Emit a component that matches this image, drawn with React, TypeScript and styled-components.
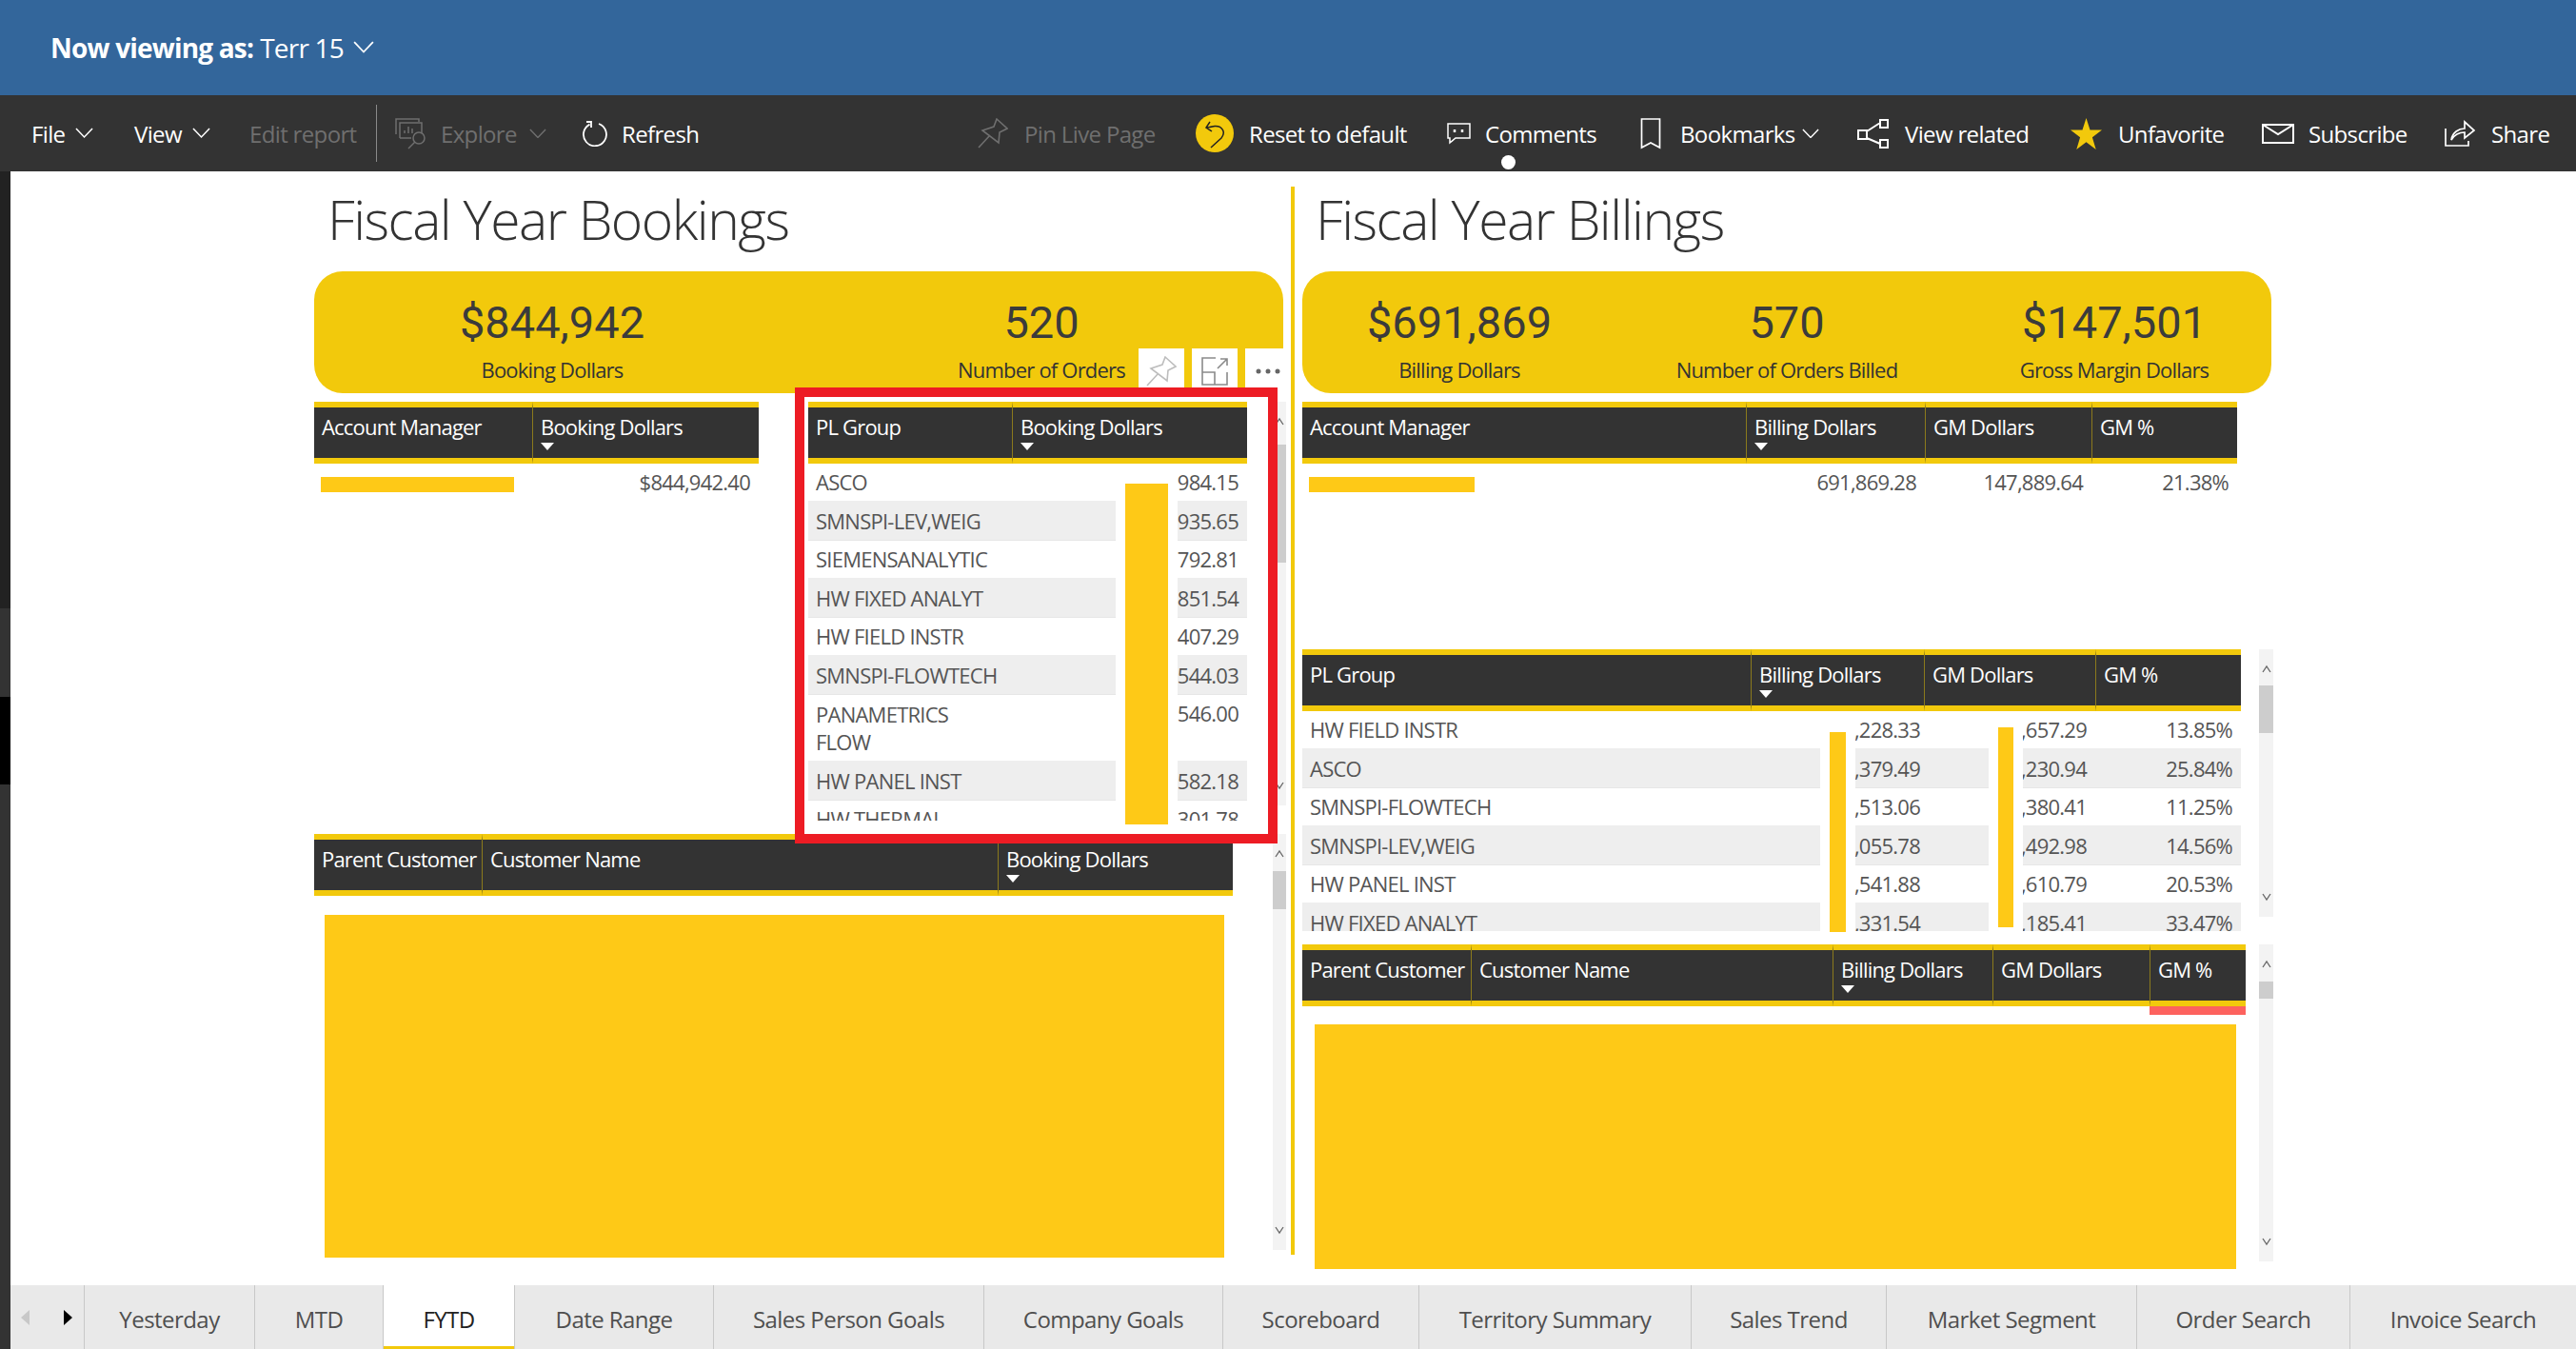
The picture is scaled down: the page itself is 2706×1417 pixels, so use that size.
import React from 'react'
import styled, { createGlobalStyle } from 'styled-components'

const FONT = "'Open Sans', 'Noto Sans', sans-serif"
const GOLD = '#f2c90c'
const BAR = '#fec917'

const GlobalStyle = createGlobalStyle`
  html, body {
    margin: 0;
    padding: 0;
    background: #fff;
  }
  * {
    box-sizing: border-box;
  }
`

const Page = styled.div`
  display: flex;
  flex-direction: column;
  width: 2706px;
  height: 1417px;
  overflow: hidden;
  font-family: ${FONT};
`
const Banner = styled.header`
  display: flex;
  align-items: center;
  flex: 0 0 100px;
  padding: 0 0 0 53px;
  background: #33669b;
  color: #fff;
  font-size: 28px;
  letter-spacing: -0.8px;
`
const BannerStrong = styled.strong`
  font-weight: 700;
  margin-right: 7px;
`
const BannerCaret = styled.span`
  display: flex;
  margin-left: 10px;
`
const Toolbar = styled.nav`
  position: relative;
  display: flex;
  align-items: center;
  flex: 0 0 80px;
  padding-left: 33px;
  background: #333;
  font-size: 24px;
  letter-spacing: -0.65px;
`
const ToolItem = styled.div<{ $w?: number; $off?: boolean; $gap?: number }>`
  display: flex;
  align-items: center;
  flex: 0 0 ${({ $w }) => ($w ? `${$w}px` : 'auto')};
  gap: ${({ $gap }) => $gap ?? 14}px;
  height: 44px;
  white-space: nowrap;
  color: ${({ $off }) => ($off ? '#6f6f6f' : '#fff')};
`
const ToolCaret = styled.span<{ $ml: number }>`
  display: flex;
  margin-left: ${({ $ml }) => $ml}px;
`
const ToolRule = styled.div`
  flex: 0 0 1px;
  height: 60px;
  margin-right: 19px;
  background: #8a8a8a;
`
const ActiveDot = styled.span`
  position: absolute;
  left: 1577px;
  top: 63px;
  width: 15px;
  height: 15px;
  border-radius: 50%;
  background: #fff;
`
const Body = styled.div`
  display: flex;
  flex: 1;
  min-height: 0;
`
const Edge = styled.div`
  display: flex;
  flex-direction: column;
  flex: 0 0 11px;
  background: #333;
`
const EdgeBlock = styled.div<{ $h: number; $c: string }>`
  flex: 0 0 ${({ $h }) => $h}px;
  background: ${({ $c }) => $c};
`
const Canvas = styled.div`
  flex: 1;
  display: flex;
  flex-direction: column;
  min-width: 0;
`
const Report = styled.main`
  display: flex;
  flex: 1;
  padding-left: 319px;
  min-height: 0;
  color: #555;
`
const Column = styled.section<{ $w: number; $ml?: number }>`
  position: relative;
  flex: 0 0 ${({ $w }) => $w}px;
  margin-left: ${({ $ml }) => $ml ?? 0}px;
`
const Divider = styled.div`
  flex: 0 0 4px;
  height: 1122px;
  margin-top: 16px;
  background: ${GOLD};
`
const Title = styled.h1`
  display: flex;
  align-items: center;
  height: 105px;
  margin: 0;
  padding: 0 0 5px 14px;
  font-size: 57px;
  font-weight: 300;
  letter-spacing: -1.5px;
  color: #333;
`
const KpiCard = styled.div<{ $n: number }>`
  position: relative;
  display: grid;
  grid-template-columns: repeat(${({ $n }) => $n}, ${({ $n }) => ($n === 2 ? 514 : 344)}px);
  justify-content: center;
  width: 1018px;
  height: 128px;
  margin-bottom: 9px;
  padding: 24px ${({ $n }) => ($n === 2 ? 4 : 0)}px 0 0;
  border-radius: 30px;
  background: ${GOLD};
`
const Kpi = styled.div`
  display: flex;
  flex-direction: column;
  align-items: center;
  min-width: 0;
  color: #333;
`
const KpiValue = styled.div`
  height: 60px;
  font-family: Roboto, sans-serif;
  font-size: 47px;
  line-height: 60px;
  letter-spacing: 0;
  color: #3b3b3b;
`
const KpiLabel = styled.div`
  margin-top: 4px;
  font-size: 22px;
  line-height: 30px;
  letter-spacing: -0.8px;
  white-space: nowrap;
`
const VisualActions = styled.div`
  position: absolute;
  left: 866px;
  top: 81px;
  display: flex;
  gap: 8px;
`
const ActionBox = styled.div`
  display: flex;
  align-items: center;
  justify-content: center;
  width: 48px;
  height: 41px;
  padding-top: 7px;
  background: #fff;
`
const Row = styled.div<{ $h: number }>`
  display: flex;
  align-items: flex-start;
  height: ${({ $h }) => $h}px;
`
const TableWrap = styled.div<{ $w: number; $mr?: number }>`
  position: relative;
  flex: 0 0 ${({ $w }) => $w}px;
  margin-right: ${({ $mr }) => $mr ?? 0}px;
`
const HeadRow = styled.div<{ $cols: string }>`
  display: grid;
  grid-template-columns: ${({ $cols }) => $cols};
  height: 65px;
  background: #333;
`
const HeadCell = styled.div`
  padding: 5px 0 0 8px;
  border-top: 6px solid ${GOLD};
  border-bottom: 6px solid ${GOLD};
  border-left: 1px solid #8b7a1c;
  color: #fff;
  font-size: 22px;
  line-height: 30px;
  letter-spacing: -0.8px;
  white-space: nowrap;
  overflow: hidden;
  &:first-child {
    border-left: 0;
  }
`
const SortMark = styled.span`
  display: block;
  width: 0;
  height: 0;
  margin: 2px 0 0 0;
  border-left: 7px solid transparent;
  border-right: 7px solid transparent;
  border-top: 8px solid #fff;
`
const BodyClip = styled.div<{ $h: number }>`
  height: ${({ $h }) => $h}px;
  overflow: hidden;
`
const DataRow = styled.div<{ $cols: string; $h: number }>`
  display: grid;
  grid-template-columns: ${({ $cols }) => $cols};
  height: ${({ $h }) => $h}px;
`
const DataCell = styled.div<{ $shade?: boolean; $right?: boolean; $pr?: number; $top?: boolean }>`
  display: flex;
  align-items: ${({ $top }) => ($top ? 'flex-start' : 'center')};
  justify-content: ${({ $right }) => ($right ? 'flex-end' : 'flex-start')};
  padding: ${({ $shade, $top }) => ($top ? 5 : $shade ? 1 : 0)}px ${({ $right, $pr }) => ($right ? $pr ?? 9 : 0)}px 0
    ${({ $right }) => ($right ? 0 : 8)}px;
  overflow: hidden;
  background: ${({ $shade }) => ($shade ? '#eee' : 'transparent')};
  border-bottom: ${({ $shade }) => ($shade ? '1px solid #e6e6e6' : '0')};
  font-size: 22px;
  line-height: 29px;
  letter-spacing: -0.75px;
  white-space: nowrap;
  color: #555;
`
const DataBar = styled.div<{ $l: number; $t: number; $w: number; $h: number }>`
  position: absolute;
  left: ${({ $l }) => $l}px;
  top: ${({ $t }) => $t}px;
  width: ${({ $w }) => $w}px;
  height: ${({ $h }) => $h}px;
  background: ${BAR};
`
const FlatBar = styled.div<{ $w: number }>`
  width: ${({ $w }) => $w}px;
  height: 16px;
  margin: 4px 0 0 -1px;
  background: ${BAR};
`
const Redacted = styled.div<{ $w: number; $h: number; $ml: number; $mt: number }>`
  width: ${({ $w }) => $w}px;
  height: ${({ $h }) => $h}px;
  margin: ${({ $mt }) => $mt}px 0 0 ${({ $ml }) => $ml}px;
  background: ${BAR};
`
const WarnStrip = styled.div`
  width: 101px;
  height: 9px;
  margin-left: 890px;
  background: #fd625e;
`
const Track = styled.div<{ $h: number; $w: number }>`
  display: flex;
  flex-direction: column;
  align-items: center;
  flex: 0 0 ${({ $w }) => $w}px;
  height: ${({ $h }) => $h}px;
  padding: 15px 0;
  background: #f3f3f3;
`
const Thumb = styled.div<{ $top: number; $h: number }>`
  flex: 0 0 ${({ $h }) => $h}px;
  align-self: stretch;
  margin-top: ${({ $top }) => $top}px;
  background: #cdcdcd;
`
const TrackEnd = styled.div`
  margin-top: auto;
  line-height: 0;
`
const Highlight = styled.div`
  position: absolute;
  left: 505px;
  top: 227px;
  width: 507px;
  height: 479px;
  border: 10px solid #ed1c24;
  pointer-events: none;
`
const Tabs = styled.div`
  display: flex;
  flex: 0 0 67px;
  background: #e9e9e9;
`
const TabArrows = styled.div`
  display: flex;
  align-items: center;
  flex: 0 0 78px;
  gap: 36px;
  padding-left: 11px;
  border-right: 1px solid #c8c8c8;
`
const TabArrow = styled.span<{ $left?: boolean }>`
  width: 0;
  height: 0;
  border-top: 8px solid transparent;
  border-bottom: 8px solid transparent;
  ${({ $left }) => ($left ? 'border-right: 9px solid #c8c8c8;' : 'border-left: 9px solid #000;')}
`
const Tab = styled.div<{ $w: number; $active?: boolean }>`
  display: flex;
  align-items: center;
  justify-content: center;
  flex: 0 0 ${({ $w }) => $w}px;
  padding-top: 3px;
  border-right: 1px solid #c8c8c8;
  box-shadow: ${({ $active }) => ($active ? `inset 0 -3px 0 ${GOLD}` : 'none')};
  background: ${({ $active }) => ($active ? '#fff' : 'transparent')};
  color: ${({ $active }) => ($active ? '#222' : '#4f4f4f')};
  font-size: 24px;
  font-weight: 500;
  letter-spacing: -0.55px;
  white-space: nowrap;
  &:last-child {
    border-right: 0;
  }
`
const PctCell = styled.span`
  flex: 0 0 153px;
  text-align: right;
`

const Chevron = ({ size = 18, dim = false }: { size?: number; dim?: boolean }) => (
  <svg width={size} height={size * 0.6} viewBox="0 0 20 12" fill="none" stroke={dim ? '#6f6f6f' : '#fff'} strokeWidth="1.6">
    <path d="M1 1l9 9.500L19 1" />
  </svg>
)

const ScrollArrow = ({ up }: { up?: boolean }) => (
  <svg width="10" height="12" viewBox="0 0 10 12" fill="none" stroke="#666" strokeWidth="1.3">
    <path d={up ? 'M1 9l4-6 4 6' : 'M1 3l4 6 4-6'} />
  </svg>
)

const Scroll = ({ h, w = 14, top, thumb }: { h: number; w?: number; top: number; thumb: number }) => (
  <Track $h={h} $w={w}>
    <ScrollArrow up />
    <Thumb $top={top} $h={thumb} />
    <TrackEnd>
      <ScrollArrow />
    </TrackEnd>
  </Track>
)

const PinIcon = ({ stroke = '#6f6f6f', size = 32 }: { stroke?: string; size?: number }) => (
  <svg width={size} height={size} viewBox="0 0 32 32" fill="none" stroke={stroke} strokeWidth="1.6">
    <path d="M20 1L31 11l-8 4-1 11L5 13l12-4 3-8zM1 31l12-13" />
  </svg>
)
const ExploreIcon = () => (
  <svg width="33" height="33" viewBox="0 0 33 33" fill="none" stroke="#6f6f6f" strokeWidth="1.5">
    <path d="M1 17V1h24v3M5 21V5h23v11M5 21h12M10 16v-3M14 16V9M18 16v-5" />
    <circle cx="25" cy="21" r="6" />
    <path d="M21 25l-7 7" />
  </svg>
)
const RefreshIcon = () => (
  <svg width="27" height="27" viewBox="0 0 27 27" fill="none" stroke="#fff" strokeWidth="1.8">
    <path d="M17 3a12 12 0 1 1-9.500 .6M4 1h5v6" />
  </svg>
)
const ResetIcon = () => (
  <svg width="40" height="40" viewBox="0 0 40 40" fill="none">
    <circle cx="20" cy="20" r="20" fill={GOLD} />
    <path d="M16 35l11-10c5-6 1-13-7-12.500l-8 1.500M15 8l-4 6 6 4" stroke="#222" strokeWidth="1.5" />
  </svg>
)
const CommentIcon = () => (
  <svg width="25" height="23" viewBox="0 0 25 23" fill="none" stroke="#fff" strokeWidth="1.5">
    <path d="M1 1h23v15H9l-6 5v-5H1z" />
    <path d="M8 7v3M16 7v3" strokeWidth="2.500" />
  </svg>
)
const BookmarkIcon = () => (
  <svg width="22" height="33" viewBox="0 0 22 33" fill="none" stroke="#fff" strokeWidth="1.7">
    <path d="M1.500 1h19v30l-9.500-5-9.500 5z" />
  </svg>
)
const RelatedIcon = () => (
  <svg width="33" height="31" viewBox="0 0 33 31" fill="none" stroke="#fff" strokeWidth="2">
    <path d="M1 12h9v9H1zM24 1h8v8h-8zM24 22h8v8h-8zM10 13l14-9M10 20l14 6" />
  </svg>
)
const StarIcon = () => (
  <svg width="33" height="33" viewBox="0 0 33 33" fill={GOLD}>
    <path d="M16.500 0l4 12.600H33l-10.100 7.600 3.800 12.800-10.200-7.800L6.300 33l3.800-12.800L0 12.600h12.500z" />
  </svg>
)
const MailIcon = () => (
  <svg width="34" height="21" viewBox="0 0 34 21" fill="none" stroke="#fff" strokeWidth="2">
    <path d="M1 1h32v19H1zM1 1l16 10L33 1" />
  </svg>
)
const ShareIcon = () => (
  <svg width="32" height="28" viewBox="0 0 32 28" fill="none" stroke="#fff" strokeWidth="1.700">
    <path d="M1 9v18h24v-5M7 21c1-8 8-12 14-12V2l10 9-10 8v-6c-6 0-11 3-14 8z" />
  </svg>
)
const FocusIcon = () => (
  <svg width="30" height="30" viewBox="0 0 30 30" fill="none" stroke="#8a8a8a" strokeWidth="1.6">
    <path d="M16 1H2v28h26V16M2 16h13v13M18 12L28 2M21 2h7v7" />
  </svg>
)
const DotsIcon = () => (
  <svg width="26" height="6" viewBox="0 0 26 6" fill="#666">
    <circle cx="3" cy="3" r="2.500" />
    <circle cx="13" cy="3" r="2.500" />
    <circle cx="23" cy="3" r="2.500" />
  </svg>
)

type Head = { label: string; sorted?: boolean }

const TableHead = ({ cols, heads }: { cols: string; heads: Head[] }) => (
  <HeadRow $cols={cols}>
    {heads.map((h) => (
      <HeadCell key={h.label}>
        {h.label}
        {h.sorted && <SortMark />}
      </HeadCell>
    ))}
  </HeadRow>
)

const bookingGroups: [React.ReactNode, string, number][] = [
  ['ASCO', '984.15', 39],
  ['SMNSPI-LEV,WEIG', '935.65', 42],
  ['SIEMENSANALYTIC', '792.81', 39],
  ['HW FIXED ANALYT', '851.54', 42],
  ['HW FIELD INSTR', '407.29', 39],
  ['SMNSPI-FLOWTECH', '544.03', 42],
  [<>PANAMETRICS<br />FLOW</>, '546.00', 69],
  ['HW PANEL INST', '582.18', 42],
  ['HW THERMAL', '301.78', 39],
]

const billingGroups = [
  ['HW FIELD INSTR', ',228.33', ',657.29', '13.85%'],
  ['ASCO', ',379.49', ',230.94', '25.84%'],
  ['SMNSPI-FLOWTECH', ',513.06', ',380.41', '11.25%'],
  ['SMNSPI-LEV,WEIG', ',055.78', ',492.98', '14.56%'],
  ['HW PANEL INST', ',541.88', ',610.79', '20.53%'],
  ['HW FIXED ANALYT', ',331.54', ',185.41', '33.47%'],
]

const tabs: [string, number][] = [
  ['Yesterday', 179],
  ['MTD', 135],
  ['FYTD', 138],
  ['Date Range', 209],
  ['Sales Person Goals', 284],
  ['Company Goals', 251],
  ['Scoreboard', 206],
  ['Territory Summary', 286],
  ['Sales Trend', 205],
  ['Market Segment', 263],
  ['Order Search', 224],
  ['Invoice Search', 237],
]

const App = () => {
  const bookingGrid = '323px 65px 73px'
  const billingGrid = '544px 37px 140px 36px 229px'
  return (
    <Page>
      <GlobalStyle />
      <Banner>
        <BannerStrong>Now viewing as:</BannerStrong> Terr 15
        <BannerCaret><Chevron size={22} /></BannerCaret>
      </Banner>
      <Toolbar>
        <ToolItem $w={108}>File <ToolCaret $ml={-3}><Chevron size={19} /></ToolCaret></ToolItem>
        <ToolItem $w={121}>View <ToolCaret $ml={-3}><Chevron size={19} /></ToolCaret></ToolItem>
        <ToolItem $w={133} $off>Edit report</ToolItem>
        <ToolRule />
        <ToolItem $w={197} $off $gap={15}><ExploreIcon />Explore <ToolCaret $ml={-2}><Chevron dim /></ToolCaret></ToolItem>
        <ToolItem $w={415}><RefreshIcon />Refresh</ToolItem>
        <ToolItem $w={229} $off $gap={17}><PinIcon />Pin Live Page</ToolItem>
        <ToolItem $w={264} $gap={16}><ResetIcon />Reset to default</ToolItem>
        <ToolItem $w={203} $gap={15}><CommentIcon />Comments</ToolItem>
        <ToolItem $w={228} $gap={20}><BookmarkIcon />Bookmarks <ToolCaret $ml={-13}><Chevron /></ToolCaret></ToolItem>
        <ToolItem $w={224} $gap={17}><RelatedIcon />View related</ToolItem>
        <ToolItem $w={201} $gap={17}><StarIcon />Unfavorite</ToolItem>
        <ToolItem $w={192} $gap={15}><MailIcon />Subscribe</ToolItem>
        <ToolItem $gap={17}><ShareIcon />Share</ToolItem>
        <ActiveDot />
      </Toolbar>
      <Body>
        <Edge>
          <EdgeBlock $h={459} $c="#222" />
          <EdgeBlock $h={93} $c="#333" />
          <EdgeBlock $h={92} $c="#000" />
        </Edge>
        <Canvas>
          <Report>
            <Column $w={1026}>
              <Title>Fiscal Year Bookings</Title>
              <KpiCard $n={2}>
                <Kpi>
                  <KpiValue>$844,942</KpiValue>
                  <KpiLabel>Booking Dollars</KpiLabel>
                </Kpi>
                <Kpi>
                  <KpiValue>520</KpiValue>
                  <KpiLabel>Number of Orders</KpiLabel>
                </Kpi>
                <VisualActions>
                  <ActionBox><PinIcon stroke="#bdbdbd" /></ActionBox>
                  <ActionBox><FocusIcon /></ActionBox>
                  <ActionBox><DotsIcon /></ActionBox>
                </VisualActions>
              </KpiCard>
              <Row $h={454}>
                <TableWrap $w={467} $mr={52}>
                  <TableHead
                    cols="229px 238px"
                    heads={[{ label: 'Account Manager' }, { label: 'Booking Dollars', sorted: true }]}
                  />
                  <DataRow $cols="229px 238px" $h={39}>
                    <DataCell><FlatBar $w={203} /></DataCell>
                    <DataCell $right>$844,942.40</DataCell>
                  </DataRow>
                </TableWrap>
                <TableWrap $w={461} $mr={27}>
                  <TableHead
                    cols="214px 247px"
                    heads={[{ label: 'PL Group' }, { label: 'Booking Dollars', sorted: true }]}
                  />
                  <BodyClip $h={375}>
                    {bookingGroups.map(([name, value, h], i) => (
                      <DataRow key={value} $cols={bookingGrid} $h={h}>
                        <DataCell $shade={i % 2 === 1}>{name}</DataCell>
                        <DataCell />
                        <DataCell $shade={i % 2 === 1} $right $top={h > 42}>{value}</DataCell>
                      </DataRow>
                    ))}
                  </BodyClip>
                  <DataBar $l={333} $t={86} $w={45} $h={358} />
                </TableWrap>
                <Scroll h={424} top={18} thumb={124} />
              </Row>
              <Row $h={470}>
                <TableWrap $w={965} $mr={42}>
                  <TableHead
                    cols="176px 542px 247px"
                    heads={[{ label: 'Parent Customer' }, { label: 'Customer Name' }, { label: 'Booking Dollars', sorted: true }]}
                  />
                  <Redacted $w={945} $h={360} $ml={11} $mt={20} />
                </TableWrap>
                <Scroll h={437} top={12} thumb={40} />
              </Row>
              <Highlight />
            </Column>
            <Divider />
            <Column $w={1030} $ml={8}>
              <Title>Fiscal Year Billings</Title>
              <KpiCard $n={3}>
                <Kpi>
                  <KpiValue>$691,869</KpiValue>
                  <KpiLabel>Billing Dollars</KpiLabel>
                </Kpi>
                <Kpi>
                  <KpiValue>570</KpiValue>
                  <KpiLabel>Number of Orders Billed</KpiLabel>
                </Kpi>
                <Kpi>
                  <KpiValue>$147,501</KpiValue>
                  <KpiLabel>Gross Margin Dollars</KpiLabel>
                </Kpi>
              </KpiCard>
              <Row $h={260}>
                <TableWrap $w={982}>
                  <TableHead
                    cols="466px 188px 175px 153px"
                    heads={[
                      { label: 'Account Manager' },
                      { label: 'Billing Dollars', sorted: true },
                      { label: 'GM Dollars' },
                      { label: 'GM %' },
                    ]}
                  />
                  <DataRow $cols="466px 188px 175px 153px" $h={39}>
                    <DataCell><FlatBar $w={174} /></DataCell>
                    <DataCell $right>691,869.28</DataCell>
                    <DataCell $right>147,889.64</DataCell>
                    <DataCell $right>21.38%</DataCell>
                  </DataRow>
                </TableWrap>
              </Row>
              <Row $h={310}>
                <TableWrap $w={986} $mr={19}>
                  <TableHead
                    cols="471px 182px 180px 153px"
                    heads={[
                      { label: 'PL Group' },
                      { label: 'Billing Dollars', sorted: true },
                      { label: 'GM Dollars' },
                      { label: 'GM %' },
                    ]}
                  />
                  <BodyClip $h={231}>
                    {billingGroups.map(([name, billing, gm, pct], i) => (
                      <DataRow key={name} $cols={billingGrid} $h={i % 2 === 1 ? 42 : 39}>
                        <DataCell $shade={i % 2 === 1}>{name}</DataCell>
                        <DataCell />
                        <DataCell $shade={i % 2 === 1} $right $pr={72}>{billing}</DataCell>
                        <DataCell />
                        <DataCell $shade={i % 2 === 1} $right>
                          {gm}
                          <PctCell>{pct}</PctCell>
                        </DataCell>
                      </DataRow>
                    ))}
                  </BodyClip>
                  <DataBar $l={554} $t={87} $w={17} $h={210} />
                  <DataBar $l={731} $t={82} $w={16} $h={210} />
                </TableWrap>
                <Scroll h={281} w={15} top={11} thumb={50} />
              </Row>
              <Row $h={341}>
                <TableWrap $w={991} $mr={14}>
                  <TableHead
                    cols="177px 380px 168px 165px 101px"
                    heads={[
                      { label: 'Parent Customer' },
                      { label: 'Customer Name' },
                      { label: 'Billing Dollars', sorted: true },
                      { label: 'GM Dollars' },
                      { label: 'GM %' },
                    ]}
                  />
                  <WarnStrip />
                  <Redacted $w={968} $h={257} $ml={13} $mt={10} />
                </TableWrap>
                <Scroll h={333} w={15} top={12} thumb={18} />
              </Row>
            </Column>
          </Report>
          <Tabs>
            <TabArrows>
              <TabArrow $left />
              <TabArrow />
            </TabArrows>
            {tabs.map(([label, w]) => (
              <Tab key={label} $w={w} $active={label === 'FYTD'}>{label}</Tab>
            ))}
          </Tabs>
        </Canvas>
      </Body>
    </Page>
  )
}

export default App
